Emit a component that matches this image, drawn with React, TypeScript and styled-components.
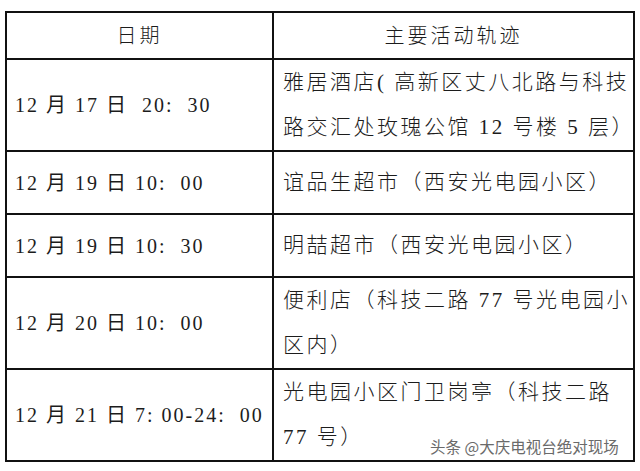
import React from 'react'
import styled, { createGlobalStyle } from 'styled-components'

const GlobalStyle = createGlobalStyle`
  html, body {
    margin: 0;
    padding: 0;
    background: #ffffff;
  }
`

const Page = styled.div`
  position: relative;
  width: 640px;
  height: 471px;
  padding: 11px 0 0 5px;
  box-sizing: border-box;
  color: #1c1c1c;
`

const Table = styled.table`
  border-collapse: collapse;
  table-layout: fixed;
  width: 630px;
  font-family: "Liberation Serif", "Noto Sans CJK SC", serif;
`

const HeadCell = styled.th`
  border: 2px solid #111;
  padding: 0;
  font-family: "Liberation Serif", "Noto Sans CJK SC", serif;
  font-weight: 300;
  font-size: 20px;
  line-height: 24px;
  letter-spacing: 3px;
  text-align: center;
  vertical-align: middle;
`

const DateCell = styled.td`
  border: 2px solid #111;
  padding: 0 0 0 8px;
  font-family: "Liberation Serif", "Noto Sans CJK SC", serif;
  font-size: 20px;
  line-height: 24px;
  letter-spacing: 2px;
  white-space: pre;
  vertical-align: middle;
`

const PlaceCell = styled.td`
  border: 2px solid #111;
  padding: 0 0 0 9px;
  font-family: "Liberation Serif", "Noto Sans CJK SC", serif;
  font-size: 21px;
  font-weight: 300;
  line-height: 45px;
  letter-spacing: 2.5px;
  white-space: pre;
  vertical-align: middle;
`

const Row = styled.tr<{ $h: number }>`
  height: ${(p) => p.$h}px;
`

const Watermark = styled.div`
  position: absolute;
  left: 430px;
  top: 436px;
  font-family: "Noto Sans CJK SC", sans-serif;
  font-weight: 400;
  font-size: 15.5px;
  line-height: 20px;
  color: #6a6a6a;
  text-shadow: 0 0 2px #fff, 0 0 2px #fff;
  white-space: nowrap;
`

const rows: { h: number; date: string; place: string[] }[] = [
  {
    h: 91,
    date: '12 月 17 日  20:  30',
    place: ['雅居酒店( 高新区丈八北路与科技', '路交汇处玫瑰公馆 12 号楼 5 层）'],
  },
  { h: 63, date: '12 月 19 日 10:  00', place: ['谊品生超市（西安光电园小区）'] },
  { h: 63, date: '12 月 19 日 10:  30', place: ['明喆超市（西安光电园小区）'] },
  {
    h: 92,
    date: '12 月 20 日 10:  00',
    place: ['便利店（科技二路 77 号光电园小', '区内）'],
  },
  {
    h: 90,
    date: '12 月 21 日 7: 00-24:  00',
    place: ['光电园小区门卫岗亭（科技二路', '77 号）'],
  },
]

const App = () => (
  <>
    <GlobalStyle />
    <Page>
      <Table>
        <colgroup>
          <col style={{ width: 267 }} />
          <col />
        </colgroup>
        <thead>
          <Row $h={47}>
            <HeadCell>日期</HeadCell>
            <HeadCell>主要活动轨迹</HeadCell>
          </Row>
        </thead>
        <tbody>
          {rows.map((r) => (
            <Row $h={r.h} key={r.date}>
              <DateCell>{r.date}</DateCell>
              <PlaceCell>{r.place.join('\n')}</PlaceCell>
            </Row>
          ))}
        </tbody>
      </Table>
      <Watermark>头条 @大庆电视台绝对现场</Watermark>
    </Page>
  </>
)

export default App
